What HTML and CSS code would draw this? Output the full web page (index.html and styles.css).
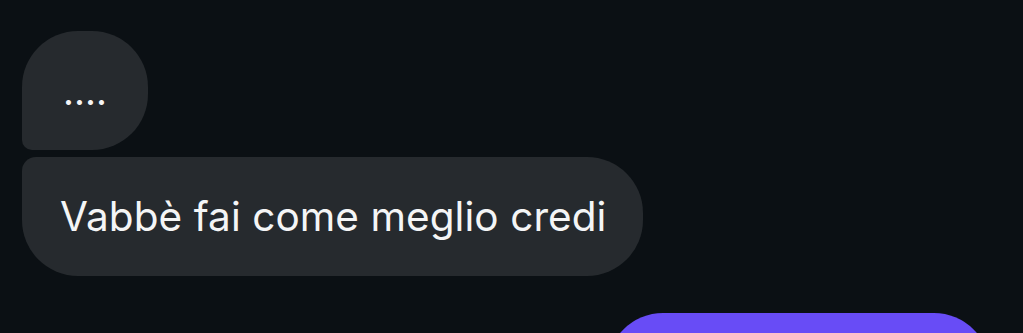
FILE: index.html
```html
<!DOCTYPE html>
<html lang="en">
<head>
    <meta charset="UTF-8">
    <meta name="viewport" content="width=device-width,initial-scale=1.0">
    <title>Chat</title>
    <link rel="stylesheet" href="styles.css">
</head>
<body>
    <main class="thread">
        <div class="bubble bubble-in first short">....</div>
        <div class="bubble bubble-in last">Vabbè fai come meglio credi</div>
        <div class="bubble bubble-out"></div>
    </main>
</body>
</html>
```

FILE: styles.css
```css
body,html{
    margin:0;
    padding:0;
    height:100%;
    overflow:hidden;
    background-color:#0b1014;
    font-family:Inter,'Noto Sans',sans-serif;
}
.thread{
    display:flex;
    flex-direction:column;
    align-items:flex-start;
    gap:7px;
    padding:31px 33px 0 22px;
}
.bubble{
    box-sizing:border-box;
    height:119px;
    padding:0 37px 0 38px;
    display:flex;
    align-items:center;
    font-size:40.5px;
    letter-spacing:0.07px;
    color:#f4f5f6;
    background-color:#262a2e;
    border-radius:56px;
    white-space:nowrap;
}
.bubble-in.first{
    border-bottom-left-radius:10px;
}
.bubble-in.last{
    border-top-left-radius:14px;
}
.bubble.short{
    width:126px;
    padding:0 0 0 41px;
    font-size:38px;
}
.bubble-out{
    align-self:flex-end;
    width:383px;
    margin-top:30px;
    background-color:#684cf6;
}
```
